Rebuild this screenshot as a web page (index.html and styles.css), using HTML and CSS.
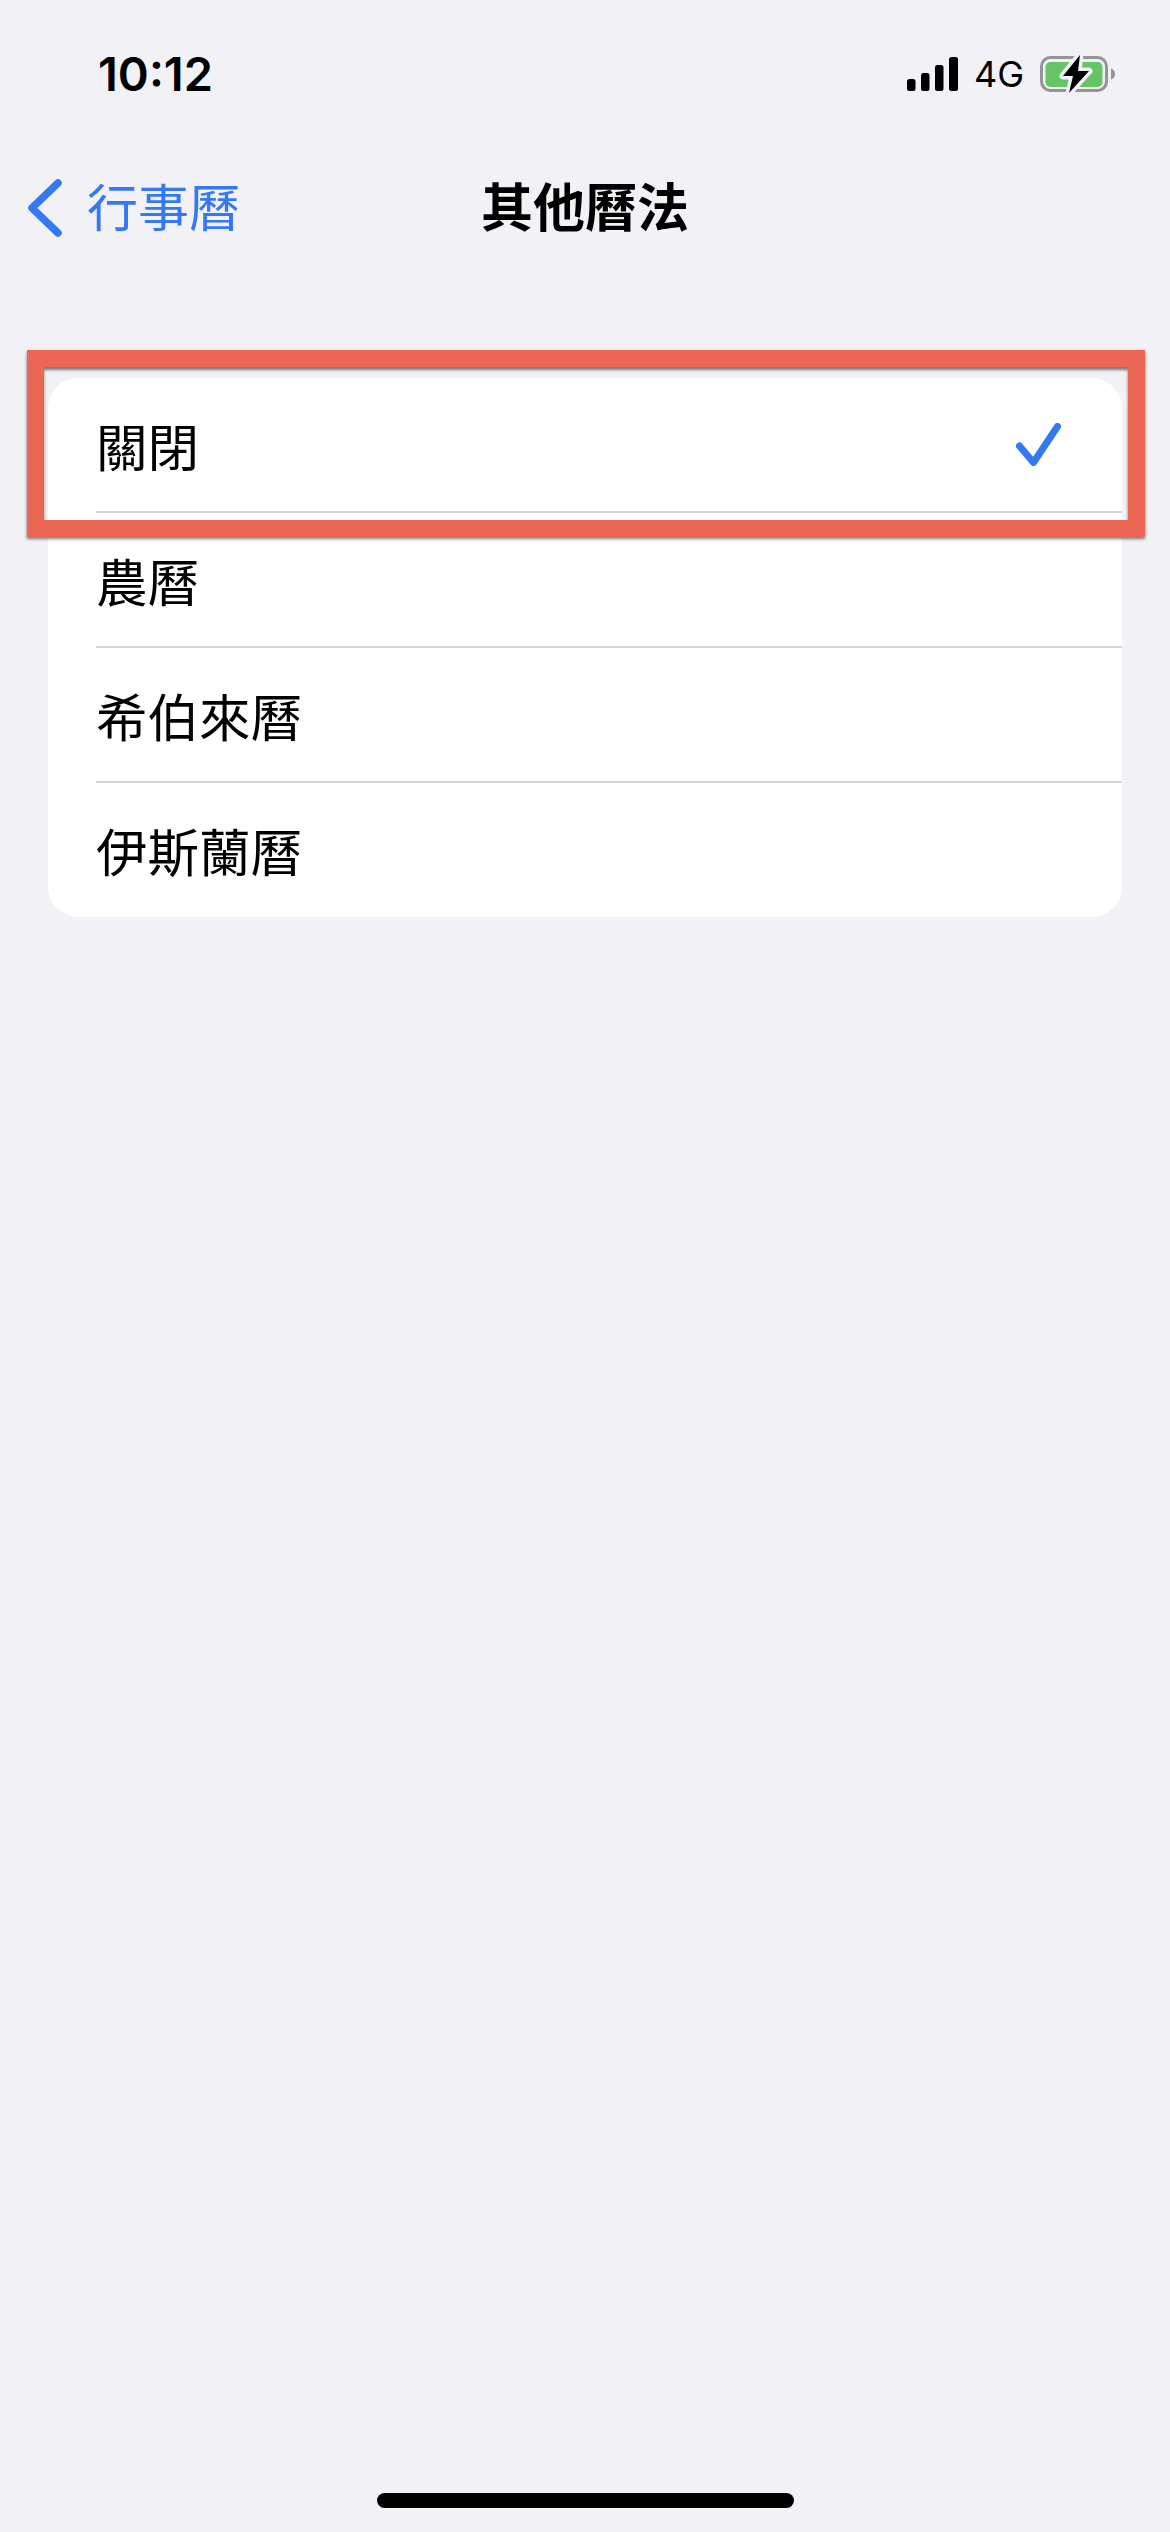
FILE: index.html
```html
<!DOCTYPE html>
<html lang="zh-Hant">
<head>
<meta charset="utf-8">
<title>其他曆法</title>
<link rel="stylesheet" href="styles.css">
</head>
<body>
<div class="page">
  <header class="status">
    <span class="time">10:12</span>
    <div class="status-right">
      <svg class="signal" width="51" height="34" viewBox="0 0 51 34"><rect x="0" y="22" width="8.5" height="12" rx="2.5"/><rect x="14" y="16" width="8.5" height="18" rx="2.5"/><rect x="28" y="8" width="8.5" height="26" rx="2.5"/><rect x="42" y="0" width="9" height="34" rx="2.5"/></svg>
      <span class="net">4G</span>
      <svg class="battery" width="76" height="40" viewBox="0 0 76 40">
        <rect x="1.5" y="3.5" width="65" height="33" rx="9" fill="none" stroke="#959595" stroke-width="3"/>
        <path d="M71 14.5c2.600.8 4 2.800 4 5.500s-1.400 4.700-4 5.500z" fill="#959595"/>
        <rect x="5.500" y="8" width="57" height="25" rx="5" fill="#65c466"/>
        <path d="M40 1L23 22h10L29 39 49 17H38z" fill="#000" stroke="#f1f1f6" stroke-width="7" paint-order="stroke" stroke-linejoin="round"/>
      </svg>
    </div>
  </header>
  <nav class="nav">
    <div class="back">
      <svg class="chevron" width="36" height="58" viewBox="0 0 36 58"><path d="M31 4L5 29l26 25" fill="none" stroke="#3478f6" stroke-width="7.500" stroke-linecap="round" stroke-linejoin="round"/></svg>
      <span class="back-label">行事曆</span>
    </div>
    <h1 class="title">其他曆法</h1>
    <div class="nav-spacer"></div>
  </nav>
  <main class="list">
    <div class="row">
      <span class="row-label">關閉</span>
      <svg class="check" width="46" height="44" viewBox="0 0 46 44"><path d="M3.500 23L17.500 39.500 41.500 3.500" fill="none" stroke="#3478f6" stroke-width="7" stroke-linecap="round" stroke-linejoin="round"/></svg>
    </div>
    <div class="row"><span class="row-label">農曆</span></div>
    <div class="row"><span class="row-label">希伯來曆</span></div>
    <div class="row row--last"><span class="row-label">伊斯蘭曆</span></div>
    <div class="highlight"></div>
  </main>
  <div class="home-indicator"></div>
</div>
</body>
</html>
```

FILE: styles.css
```css
* { box-sizing: border-box; }
html, body { margin: 0; padding: 0; }
body {
  background: #f1f1f6;
  color: #000;
  font-family: "Noto Sans CJK TC", "Noto Sans", sans-serif;
}
.page {
  width: 1170px;
  height: 2532px;
  display: flex;
  flex-direction: column;
  overflow: hidden;
}
.status {
  height: 148px;
  flex: none;
  display: flex;
  justify-content: space-between;
  align-items: flex-start;
  padding: 49px 54px 0 98px;
}
.time {
  font-family: Inter, "Liberation Sans", sans-serif;
  font-weight: 600;
  font-size: 47px;
  line-height: 50px;
}
.status-right {
  display: flex;
  align-items: center;
  gap: 16px;
  margin-top: 5px;
}
.net {
  font-family: Inter, "Liberation Sans", sans-serif;
  font-size: 36px;
  line-height: 40px;
}
.nav {
  height: 120px;
  flex: none;
  display: grid;
  grid-template-columns: 1fr auto 1fr;
  align-items: center;
  padding: 0 27px;
}
.back {
  display: flex;
  align-items: center;
  gap: 24px;
  color: #3478f6;
}
.back-label { font-size: 51px; line-height: 60px; padding-bottom: 6px; }
.title {
  margin: 0;
  font-size: 52px;
  font-weight: 700;
  line-height: 60px;
  padding-bottom: 6px;
}
.list {
  position: relative;
  margin: 110px 48px 0;
  background: #fff;
  border-radius: 30px;
  flex: none;
}
.row {
  position: relative;
  height: 135px;
  padding: 0 60px 1px 48px;
  display: flex;
  align-items: center;
  justify-content: space-between;
}
.row--last { height: 134px; }
.row:not(.row--last)::after {
  content: "";
  position: absolute;
  left: 48px;
  right: 0;
  bottom: 0;
  height: 2px;
  background: #d4d4d6;
}
.row-label { font-size: 51.5px; line-height: 60px; }
.highlight {
  position: absolute;
  left: -21px;
  right: -23px;
  top: -28px;
  height: 187px;
  border: 17px solid #ec6654;
  box-shadow: 0 2px 3px rgba(0,0,0,.5), inset 0 3px 3px rgba(0,0,0,.5);
  pointer-events: none;
}
.home-indicator {
  width: 417px;
  height: 15px;
  flex: none;
  margin: auto auto 24px;
  background: #000;
  border-radius: 8px;
}
```
